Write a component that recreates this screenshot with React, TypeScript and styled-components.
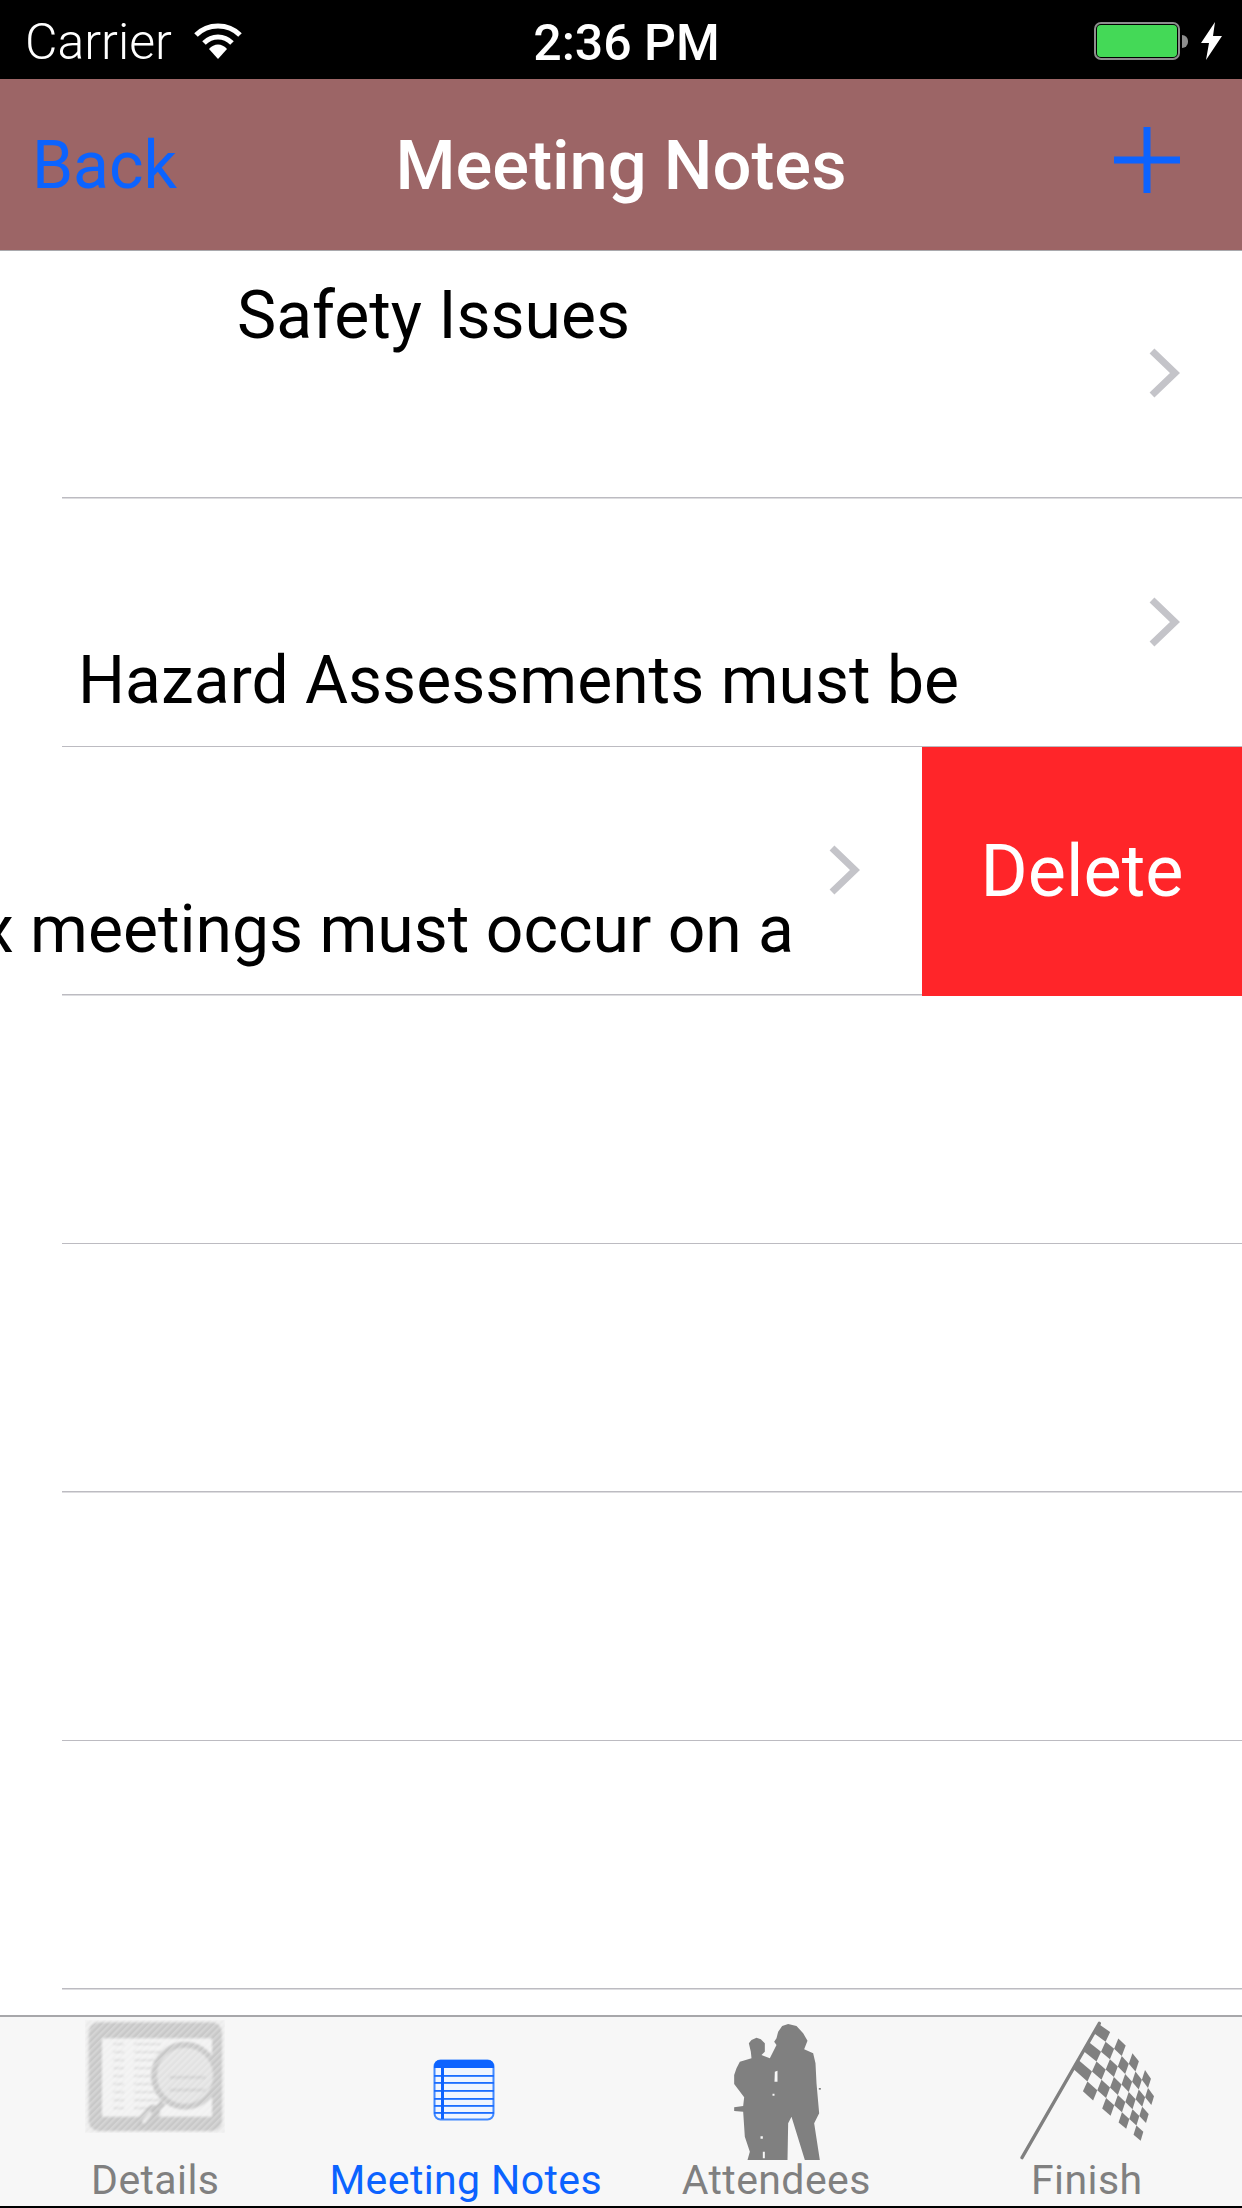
import React from "react";
import styled, { createGlobalStyle } from "styled-components";

const Global = createGlobalStyle`
  html, body { margin: 0; padding: 0; background: #fff; }
  body { font-family: Roboto, "Liberation Sans", sans-serif; }
`;

const Screen = styled.div`
  width: 1242px;
  height: 2208px;
  display: flex;
  flex-direction: column;
  overflow: hidden;
  background: #fff;
`;

const StatusBar = styled.div`
  height: 79px;
  flex: none;
  background: #000;
  color: #fff;
  display: grid;
  grid-template-columns: 1fr auto 1fr;
  align-items: center;
  padding: 3px 19px 0;
  box-sizing: border-box;
`;
const StatusLeft = styled.div`
  display: flex;
  align-items: center;
  gap: 22px;
  padding-left: 6px;
`;
const CarrierName = styled.span`
  font-size: 50px;
  font-weight: 300;
  margin-top: 1px;
`;
const StatusTime = styled.div`
  font-size: 50px;
  font-weight: 500;
  margin-top: 3px;
  margin-left: 11px;
`;
const StatusRight = styled.div`
  display: flex;
  align-items: center;
  justify-content: flex-end;
  gap: 13px;
`;
const BatteryShell = styled.div`
  width: 86px;
  height: 38px;
  box-sizing: border-box;
  border: 2px solid #8e8e8e;
  border-radius: 7px;
  padding: 1px;
  display: flex;
`;
const BatteryFill = styled.div`
  flex: 1;
  background: #44d957;
  border-radius: 4px;
`;
const BatteryNub = styled.div`
  width: 6px;
  height: 13px;
  margin-left: -11px;
  background: #8e8e8e;
  border-radius: 0 6px 6px 0;
`;

const NavBar = styled.div`
  height: 171px;
  flex: none;
  background: #9c6566;
  border-bottom: 1px solid #a9a9ad;
  display: grid;
  grid-template-columns: 1fr auto 1fr;
  align-items: center;
  padding: 0 62px;
`;
const BackLink = styled.div`
  color: #0b63ff;
  font-size: 66px;
  font-weight: 400;
  margin-top: 2px;
  margin-left: -30px;
`;
const NavTitle = styled.div`
  color: #fff;
  font-size: 68.7px;
  font-weight: 500;
  margin-top: 1px;
`;
const AddSlot = styled.div`
  display: flex;
  justify-content: flex-end;
  margin-top: -10px;
`;

const List = styled.div`
  flex: 1;
  min-height: 0;
  overflow: hidden;
  margin-top: -1px;
`;
const Row = styled.div`
  height: 248.5px;
  display: flex;
`;
const RowMain = styled.div`
  flex: 1;
  min-width: 0;
  display: flex;
  align-items: center;
  background: linear-gradient(#bcbbc1, #bcbbc1) 62px 100% / 100% 1.5px no-repeat;
`;
const NoteSlot = styled.div<{ $top?: boolean; $end?: boolean; $inset: number }>`
  flex: 1;
  min-width: 0;
  height: 100%;
  box-sizing: border-box;
  overflow: hidden;
  display: flex;
  justify-content: ${(p) => (p.$end ? "flex-end" : "flex-start")};
  align-items: ${(p) => (p.$top ? "flex-start" : "flex-end")};
  padding: ${(p) => (p.$top ? "31px 0 0" : "0 0 31px")};
  padding-left: ${(p) => p.$inset}px;
  padding-right: ${(p) => (p.$end ? 34 : 0)}px;
`;
const NoteText = styled.div`
  flex: none;
  white-space: nowrap;
  font-size: 66px;
  line-height: 70px;
  color: #000;
`;
const Chevron = styled.svg`
  flex: none;
  width: 32px;
  height: 50px;
  margin-right: 62px;
  margin-top: -2px;
`;
const DeleteAction = styled.div`
  flex: none;
  width: 320px;
  background: #ff2529;
  color: #fff;
  font-size: 72px;
  display: flex;
  align-items: center;
  justify-content: center;
`;

const TabBar = styled.div`
  height: 189px;
  flex: none;
  background: #f7f7f7;
  border-top: 2px solid #a7a7aa;
  border-bottom: 2px solid #000;
  display: grid;
  grid-template-columns: repeat(4, 1fr);
`;
const Tab = styled.div<{ $active?: boolean }>`
  display: flex;
  flex-direction: column;
  align-items: center;
  color: ${(p) => (p.$active ? "#0b63ff" : "#808080")};
`;
const IconSlot = styled.div`
  height: 146px;
  display: flex;
  align-items: center;
  justify-content: center;
`;
const DetailsSvg = styled.svg`
  width: 140px;
  height: 113px;
  margin-bottom: 28px;
`;
const NotesSvg = styled.svg`
  width: 62px;
  height: 62px;
  margin-left: -3px;
`;
const PeopleSvg = styled.svg`
  width: 97px;
  height: 140px;
`;
const FlagSvg = styled.svg`
  width: 139px;
  height: 140px;
  margin-left: 3px;
`;
const TabLabel = styled.div`
  font-size: 41px;
  line-height: 34px;
  letter-spacing: 0.4px;
`;

const flagCells = () => {
  const A = [298, 42], B = [472, 232], C = [424, 392], D = [208, 205];
  const bulge = 34;
  const rows = 6, cols = 8;
  const pt = (u: number, v: number) => {
    const uu = Math.pow(u, 0.78);
    const top = [A[0] + (B[0] - A[0]) * uu, A[1] + (B[1] - A[1]) * uu - bulge * Math.sin(Math.PI * uu) * 0.7];
    const bot = [D[0] + (C[0] - D[0]) * uu, D[1] + (C[1] - D[1]) * uu + bulge * Math.sin(Math.PI * uu) * 0.1];
    return [top[0] + (bot[0] - top[0]) * v, top[1] + (bot[1] - top[1]) * v];
  };
  const cells: string[] = [];
  for (let r = 0; r < rows; r++) {
    for (let c = 0; c < cols; c++) {
      if ((r + c) % 2 !== 0) continue;
      const ps = [pt(c / cols, r / rows), pt((c + 1) / cols, r / rows), pt((c + 1) / cols, (r + 1) / rows), pt(c / cols, (r + 1) / rows)];
      cells.push(ps.map((p) => p.map((n) => n.toFixed(1)).join(",")).join(" "));
    }
  }
  return cells;
};

const ChevronIcon = () => (
  <Chevron viewBox="0 0 32 50">
    <path d="M4 3 L27 25 L4 47" fill="none" stroke="#c4c4c9" strokeWidth="7" />
  </Chevron>
);

const WifiIcon = () => (
  <svg width="48" height="36" viewBox="0 0 48 36">
    <path d="M2 12 C14 0 34 0 46 12" fill="none" stroke="#fff" strokeWidth="5" />
    <path d="M10 20 C18 12 30 12 38 20" fill="none" stroke="#fff" strokeWidth="5" />
    <path d="M15 26 C20 20 28 20 33 26 L24 36 Z" fill="#fff" />
  </svg>
);

const BoltIcon = () => (
  <svg width="22" height="38" viewBox="0 0 22 38">
    <path d="M14 0 L0 21 L8 21 L5 38 L21 14 L12 14 Z" fill="#fff" />
  </svg>
);

const DetailsIcon = () => (
  <DetailsSvg viewBox="45 30 420 339">
    <defs>
      <filter id="bl1"><feGaussianBlur stdDeviation="3.5" /></filter>
      <pattern id="hatch" width="14" height="14" patternUnits="userSpaceOnUse" patternTransform="rotate(-45)">
        <rect width="14" height="7" fill="#ffffff" opacity="0.22" />
      </pattern>
    </defs>
    <g filter="url(#bl1)">
      <rect x="45" y="30" width="420" height="339" fill="#ececec" />
      <rect x="56" y="37" width="400" height="326" rx="30" fill="#c8c8c8" />
      <rect x="96" y="85" width="330" height="235" fill="#f1f1f1" />
      {[100, 124, 148, 172, 196, 220, 244, 268, 292].map((y) => (
        <g key={y}>
          <rect x="130" y={y} width="32" height="5" fill="#d6d6d6" />
          <rect x="192" y={y} width="80" height="5" fill="#d6d6d6" />
        </g>
      ))}
      <circle cx="345" cy="197" r="93" fill="#e2e2e2" stroke="#c8c8c8" strokeWidth="18" />
      <rect x="298" y="198" width="108" height="8" fill="#cfcfcf" />
      <rect x="298" y="236" width="108" height="8" fill="#cfcfcf" />
      <path d="M280 278 L258 300" stroke="#c0c0c0" strokeWidth="18" />
      <path d="M250 305 L222 335" stroke="#c4c4c4" strokeWidth="42" strokeLinecap="round" />
      <path d="M240 310 L222 334" stroke="#e8e8e8" strokeWidth="12" strokeLinecap="round" />
    </g>
    <rect x="45" y="30" width="420" height="339" fill="url(#hatch)" />
  </DetailsSvg>
);

const NotesIcon = () => (
  <NotesSvg viewBox="0 0 62 62">
    <defs>
      <filter id="bl2" x="-10%" y="-10%" width="120%" height="120%"><feGaussianBlur stdDeviation="0.55" /></filter>
    </defs>
    <g filter="url(#bl2)">
      <rect x="1.5" y="1.5" width="59" height="59" rx="6" fill="#f0f5ff" stroke="#3f88ff" strokeWidth="2" />
      <path d="M1 9 Q1 1 7 1 H55 Q61 1 61 9 H1 Z" fill="#0b63ff" />
      {[16, 23, 31, 39, 46, 53].map((y) => (
        <rect key={y} x="1" y={y} width="60" height="1.8" fill="#1a6dff" />
      ))}
      <rect x="8" y="8" width="3" height="52" fill="#0b63ff" />
    </g>
  </NotesSvg>
);

const PeopleIcon = () => (
  <PeopleSvg viewBox="60 30 290 420">
    <path
      fillRule="evenodd"
      fill="#808080"
      d="M240 42 L222 48 L210 65 L205 85 L198 95 L205 105 L185 145 L160 135 L170 125 L170 100 L158 88 L145 83 L130 90 L122 100 L128 125 L130 145 L95 155 L85 175 L78 195 L78 222 L108 262 L105 288 L78 292 L78 303 L105 305 L110 380 L125 425 L118 450 L238 450 L240 340 L250 320 L290 450 L335 450 L318 340 L333 310 L325 220 L322 160 L315 130 L288 118 L298 92 L285 70 L265 48 Z
         M200 185 L208 182 L208 215 L199 215 Z
         M193 251 L199 251 L199 257 L193 257 Z
         M157 379 L164 379 L164 386 L157 386 Z
         M164 425 L170 425 L170 445 L164 445 Z"
    />
    <rect x="332" y="234" width="6" height="5" fill="#808080" />
  </PeopleSvg>
);

const FlagIcon = () => (
  <FlagSvg viewBox="60 30 415 420">
    <defs>
      <filter id="bl3" x="-5%" y="-5%" width="110%" height="110%"><feGaussianBlur stdDeviation="2" /></filter>
    </defs>
    <g filter="url(#bl3)" fill="#808080">
      <path d="M68 443 L300 40" stroke="#808080" strokeWidth="10" strokeLinecap="round" />
      {flagCells().map((pts) => (
        <polygon key={pts} points={pts} />
      ))}
    </g>
  </FlagSvg>
);

export default function App() {
  return (
    <Screen>
      <Global />
      <StatusBar>
        <StatusLeft>
          <CarrierName>Carrier</CarrierName>
          <WifiIcon />
        </StatusLeft>
        <StatusTime>2:36 PM</StatusTime>
        <StatusRight>
          <BatteryShell>
            <BatteryFill />
          </BatteryShell>
          <BatteryNub />
          <BoltIcon />
        </StatusRight>
      </StatusBar>
      <NavBar>
        <BackLink>Back</BackLink>
        <NavTitle>Meeting Notes</NavTitle>
        <AddSlot>
          <svg width="66" height="66" viewBox="0 0 66 66">
            <path d="M33 0 V66 M0 33 H66" stroke="#0b63ff" strokeWidth="7" />
          </svg>
        </AddSlot>
      </NavBar>
      <List>
        <Row>
          <RowMain>
            <NoteSlot $top $inset={237}>
              <NoteText>Safety Issues</NoteText>
            </NoteSlot>
            <ChevronIcon />
          </RowMain>
        </Row>
        <Row>
          <RowMain>
            <NoteSlot $inset={78}>
              <NoteText>Hazard Assessments must be</NoteText>
            </NoteSlot>
            <ChevronIcon />
          </RowMain>
        </Row>
        <Row>
          <RowMain>
            <NoteSlot $end $inset={0}>
              <NoteText>Toolbox meetings must occur on a</NoteText>
            </NoteSlot>
            <ChevronIcon />
          </RowMain>
          <DeleteAction>Delete</DeleteAction>
        </Row>
        {[0, 1, 2, 3].map((i) => (
          <Row key={i}>
            <RowMain />
          </Row>
        ))}
      </List>
      <TabBar>
        <Tab>
          <IconSlot><DetailsIcon /></IconSlot>
          <TabLabel>Details</TabLabel>
        </Tab>
        <Tab $active>
          <IconSlot><NotesIcon /></IconSlot>
          <TabLabel>Meeting Notes</TabLabel>
        </Tab>
        <Tab>
          <IconSlot><PeopleIcon /></IconSlot>
          <TabLabel>Attendees</TabLabel>
        </Tab>
        <Tab>
          <IconSlot><FlagIcon /></IconSlot>
          <TabLabel>Finish</TabLabel>
        </Tab>
      </TabBar>
    </Screen>
  );
}
